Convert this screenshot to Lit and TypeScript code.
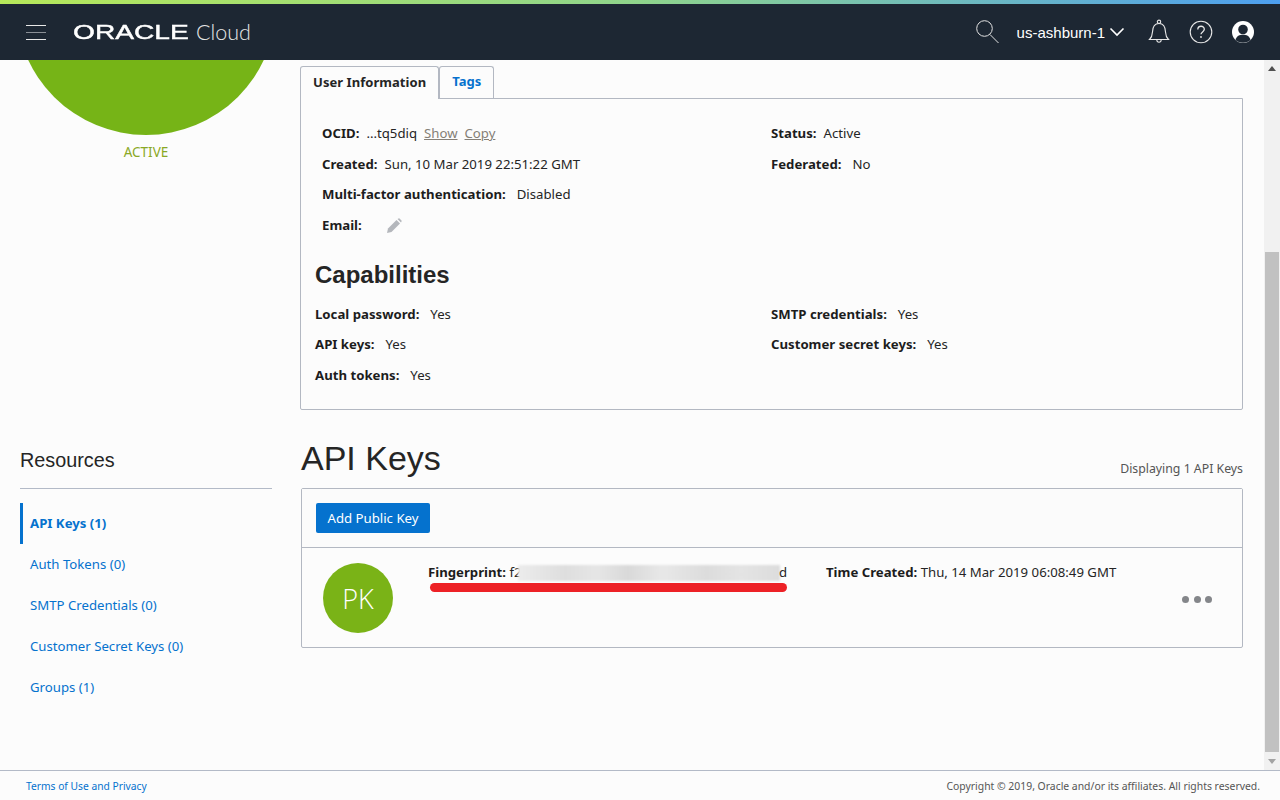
import { LitElement, html, css } from "lit";
import { customElement } from "lit/decorators.js";

@customElement("app-root")
export class AppRoot extends LitElement {
  static styles = css`
    :host { display: block; width: 1280px; height: 800px; overflow: hidden; background: #fcfcfc; color: #252525; font-family: "Noto Sans", "Open Sans", sans-serif; font-size: 13.2px; }
    .page { display: flex; flex-direction: column; height: 800px; }
    .accent { height: 4px; flex: none; background: linear-gradient(90deg, #b6e85a 0%, #8fd48c 50%, #4d9ff0 100%); }
    header { height: 56px; flex: none; background: #1d2733; color: #fff; display: flex; align-items: center; }
    .burger { margin-left: 26px; width: 20px; height: 15px; display: flex; flex-direction: column; justify-content: space-between; }
    .burger i { display: block; height: 1px; background: #e8e8e8; }
    .burger i:nth-child(2) { background: #8a8f96; }
    .logo { margin-left: 28px; display: flex; align-items: center; height: 24px; }
    .oracle { font-family: "Liberation Sans", sans-serif; font-weight: 400; -webkit-text-stroke: .45px #fff; font-size: 21px; line-height: 24px; width: 122px; display: inline-block; transform: scaleX(1.34); transform-origin: left center; white-space: nowrap; margin-left: -1px; padding-right: 1px; }
    .cloud { font-family: "Lato", sans-serif; font-weight: 300; font-size: 21.5px; line-height: 24px; color: #e6e6e6; }
    .tools { margin-left: auto; display: flex; align-items: center; height: 56px; }
    .tools svg { display: block; }
    .region { font-family: "Liberation Sans", sans-serif; font-size: 15px; margin-left: 18px; margin-right: 4px; white-space: nowrap; }
    .middle { flex: 1; display: flex; min-height: 0; }
    .main { flex: 1; display: grid; grid-template-columns: 300px 943px; overflow: hidden; align-content: start; }
    .side { padding-left: 20px; width: 252px; }
    .avatar { width: 260px; height: 260px; border-radius: 50%; background: #76b417; margin: -185px 0 0 -4px; }
    .active { text-align: center; color: #8aa825; font-size: 13.5px; margin-top: 8px; line-height: 18px; }
    .res { font-family: "Liberation Sans", sans-serif; font-size: 19.8px; line-height: 24px; margin-top: 287px; padding-bottom: 16px; border-bottom: 1px solid #b3bac7; color: #252525; }
    .menu { margin-top: 14px; display: flex; flex-direction: column; }
    .menu a { height: 41px; display: flex; align-items: center; padding: 0 0 2px 10px; color: #0572ce; box-sizing: border-box; }
    .menu a.on { font-weight: 700; border-left: 3px solid #0572ce; padding-left: 7px; }
    .content { padding-top: 6px; }
    .tabs { display: flex; height: 33px; margin-bottom: -1px; position: relative; font-size: 13px; }
    .tab { border: 1px solid #b3b8c2; border-bottom: 0; border-radius: 3px 3px 0 0; padding: 0 12px 3px; display: flex; align-items: center; font-weight: 700; height: 32px; box-sizing: border-box; letter-spacing: .05px; }
    .tab.cur { background: #fcfcfc; height: 33px; }
    .tab.link { color: #0572ce; }
    .panel { border: 1px solid #b3b8c2; border-radius: 0 0 2px 2px; height: 312px; box-sizing: border-box; background: #fcfcfc; }
    .info { display: grid; grid-template-columns: 449px 1fr; grid-auto-rows: 30.6px; padding: 19px 0 0 21px; }
    .row { display: flex; align-items: center; gap: 11px; white-space: nowrap; }
    .row.tight { gap: 7px; }
    b { font-weight: 700; color: #1d1d1d; }
    .muted { color: #857f76; text-decoration: underline; }
    .row .pencil { margin: 2px 0 0 13px; }
    h2 { font-family: "Liberation Sans", sans-serif; font-size: 24px; line-height: 28px; margin: 21px 0 0 14px; color: #252525; }
    .caps { display: grid; grid-template-columns: 456px 1fr; grid-auto-rows: 30.6px; padding: 9px 0 0 14px; }
    .keyhead { display: flex; align-items: flex-end; justify-content: space-between; margin-top: 26px; height: 52px; padding-left: 1px; }
    h1 { font-family: "Liberation Sans", sans-serif; font-weight: 400; font-size: 34px; line-height: 44px; margin: 0 0 8px; color: #252525; }
    .count { font-size: 12.3px; line-height: 18px; margin-bottom: 10px; color: #555; }
    .card { border: 1px solid #b3b8c2; border-radius: 2px; margin-left: 1px; height: 160px; box-sizing: border-box; }
    .bar { height: 59px; border-bottom: 1px solid #b3b8c2; background: #fbfbfb; padding: 14px 0 0 14px; box-sizing: border-box; }
    .btn { display: inline-flex; align-items: center; height: 30px; padding: 0 11.5px; background: #0572ce; color: #fff; border-radius: 2px; white-space: nowrap; }
    .keyrow { display: flex; position: relative; padding: 0 0 0 21px; }
    .pk { flex: none; width: 70px; height: 70px; border-radius: 50%; background: #7ab317; color: #fff; font-size: 27px; font-weight: 300; display: flex; align-items: center; justify-content: center; margin-top: 15px; font-family: "Open Sans", sans-serif; }
    .fp { margin-left: 35px; width: 398px; padding-top: 15px; line-height: 18px; white-space: nowrap; position: relative; }
    .blur { position: absolute; left: 90px; top: 17px; width: 262px; height: 16px; background: linear-gradient(90deg, #ececec 0%, #dedede 18%, #e6e6e6 30%, #d9d9d9 42%, #e8e8e8 55%, #dcdcdc 72%, #e4e4e4 85%, #dcdcdc 100%); filter: blur(1px); }
    .fpend { position: absolute; left: 351px; top: 15px; }
    .red { position: absolute; left: 2px; top: 35px; width: 357px; height: 9px; border-radius: 5px; background: #ed2126; }
    .tc { padding-top: 15px; line-height: 18px; white-space: nowrap; }
    .dots { position: absolute; right: 30px; top: 48px; display: flex; gap: 4.5px; }
    .dots i { width: 7px; height: 7px; border-radius: 50%; background: #84868a; display: block; }
    .scroll { width: 16px; flex: none; background: #f1f1f1; display: flex; flex-direction: column; align-items: center; justify-content: space-between; padding: 6px 0; box-sizing: border-box; position: relative; }
    .thumb { position: absolute; left: 1px; top: 192px; width: 14px; height: 500px; background: #c1c1c1; }
    .up { width: 0; height: 0; border: 4px solid transparent; border-top: 0; border-bottom: 5px solid #505050; }
    .down { width: 0; height: 0; border: 4px solid transparent; border-bottom: 0; border-top: 5px solid #a3a3a3; }
    footer { flex: none; height: 30px; box-sizing: border-box; border-top: 1px solid #b3bac7; display: flex; justify-content: space-between; align-items: center; padding: 0 20px 0 26px; font-size: 10.4px; color: #555; background: #fcfcfc; }
    footer a { color: #0572ce; font-size: 10.25px; }
  `;

  render() {
    return html`<div class="page">
      <div class="accent"></div>
      <header>
        <div class="burger"><i></i><i></i><i></i></div>
        <div class="logo"><span class="oracle">ORACLE</span><span class="cloud">Cloud</span></div>
        <div class="tools">
          <svg width="23" height="24" viewBox="0 0 23 24" fill="none" stroke="#e4e4e4" stroke-width="1"><circle cx="8.5" cy="8.5" r="7.8"/><path d="M14 14.5L22.5 23"/></svg>
          <span class="region">us-ashburn-1</span>
          <svg width="16" height="10" viewBox="0 0 16 10" fill="none" stroke="#fff" stroke-width="1.6"><path d="M1.5 1.5L8 8l6.5-6.5"/></svg>
          <svg style="margin-left:23px" width="22" height="26" viewBox="0 0 22 26" fill="none" stroke="#e8e8e8" stroke-width="1.1"><path d="M1.5 20.5c2-2 2.800-3.600 3-7.600C4.700 7.500 6.500 4.500 11 4.500s6.300 3 6.500 8.400c.2 4 1 5.600 3 7.600z"/><circle cx="11" cy="2.800" r="1.700"/><path d="M8.800 21c.2 3 4.200 3 4.400 0"/></svg>
          <svg style="margin-left:19px" width="24" height="24" viewBox="0 0 24 24" fill="none" stroke="#e8e8e8" stroke-width="1.1"><circle cx="12" cy="12" r="10.8"/><path d="M8.800 9.500c0-4.300 6.500-4.300 6.500-.2 0 2.500-3.300 2.700-3.300 5" stroke-width="1.3"/><circle cx="12" cy="17" r=".9" fill="#e8e8e8" stroke="none"/></svg>
          <svg style="margin:0 25px 0 18px" width="24" height="24" viewBox="0 0 24 24"><circle cx="12" cy="12" r="11" fill="#fff"/><circle cx="12" cy="9.5" r="4.8" fill="#1d2733"/><path d="M4.500 20c1-4 4-5.200 7.500-5.200s6.500 1.200 7.500 5.200c-2 1.800-4.600 2.800-7.500 2.800s-5.500-1-7.500-2.800z" fill="#1d2733"/></svg>
        </div>
      </header>
      <div class="middle">
        <div class="main">
          <aside class="side">
            <div class="avatar"></div>
            <div class="active">ACTIVE</div>
            <div class="res">Resources</div>
            <nav class="menu">
              <a class="on">API Keys (1)</a>
              <a>Auth Tokens (0)</a>
              <a>SMTP Credentials (0)</a>
              <a>Customer Secret Keys (0)</a>
              <a>Groups (1)</a>
            </nav>
          </aside>
          <section class="content">
            <div class="tabs">
              <div class="tab cur">User Information</div>
              <div class="tab link">Tags</div>
            </div>
            <div class="panel">
              <div class="info">
                <div class="row tight"><b>OCID:</b><span>...tq5diq</span><span class="muted">Show</span><span class="muted">Copy</span></div>
                <div class="row tight"><b>Status:</b><span>Active</span></div>
                <div class="row tight"><b>Created:</b><span>Sun, 10 Mar 2019 22:51:22 GMT</span></div>
                <div class="row"><b>Federated:</b><span>No</span></div>
                <div class="row" style="grid-column: span 2"><b>Multi-factor authentication:</b><span>Disabled</span></div>
                <div class="row" style="grid-column: span 2"><b>Email:</b>
                  <svg class="pencil" width="16" height="16" viewBox="0 0 16 16" fill="#b4b7bc"><path d="M1 15l1-4.500L10.500 2l3.500 3.500L5.500 14z"/><path d="M11.500 1l1-.5a1 1 0 0 1 1 0l2 2a1 1 0 0 1 0 1l-.5 1z"/></svg>
                </div>
              </div>
              <h2>Capabilities</h2>
              <div class="caps">
                <div class="row"><b>Local password:</b><span>Yes</span></div>
                <div class="row"><b>SMTP credentials:</b><span>Yes</span></div>
                <div class="row"><b>API keys:</b><span>Yes</span></div>
                <div class="row"><b>Customer secret keys:</b><span>Yes</span></div>
                <div class="row"><b>Auth tokens:</b><span>Yes</span></div>
              </div>
            </div>
            <div class="keyhead"><h1>API Keys</h1><span class="count">Displaying 1 API Keys</span></div>
            <div class="card">
              <div class="bar"><span class="btn">Add Public Key</span></div>
              <div class="keyrow">
                <div class="pk">PK</div>
                <div class="fp"><b>Fingerprint:</b> f2<span class="blur"></span><span class="fpend">d</span><span class="red"></span></div>
                <div class="tc"><b>Time Created:</b> Thu, 14 Mar 2019 06:08:49 GMT</div>
                <div class="dots"><i></i><i></i><i></i></div>
              </div>
            </div>
          </section>
        </div>
        <div class="scroll"><i class="up"></i><div class="thumb"></div><i class="down"></i></div>
      </div>
      <footer><a>Terms of Use and Privacy</a><span>Copyright © 2019, Oracle and/or its affiliates. All rights reserved.</span></footer>
    </div>`;
  }
}
